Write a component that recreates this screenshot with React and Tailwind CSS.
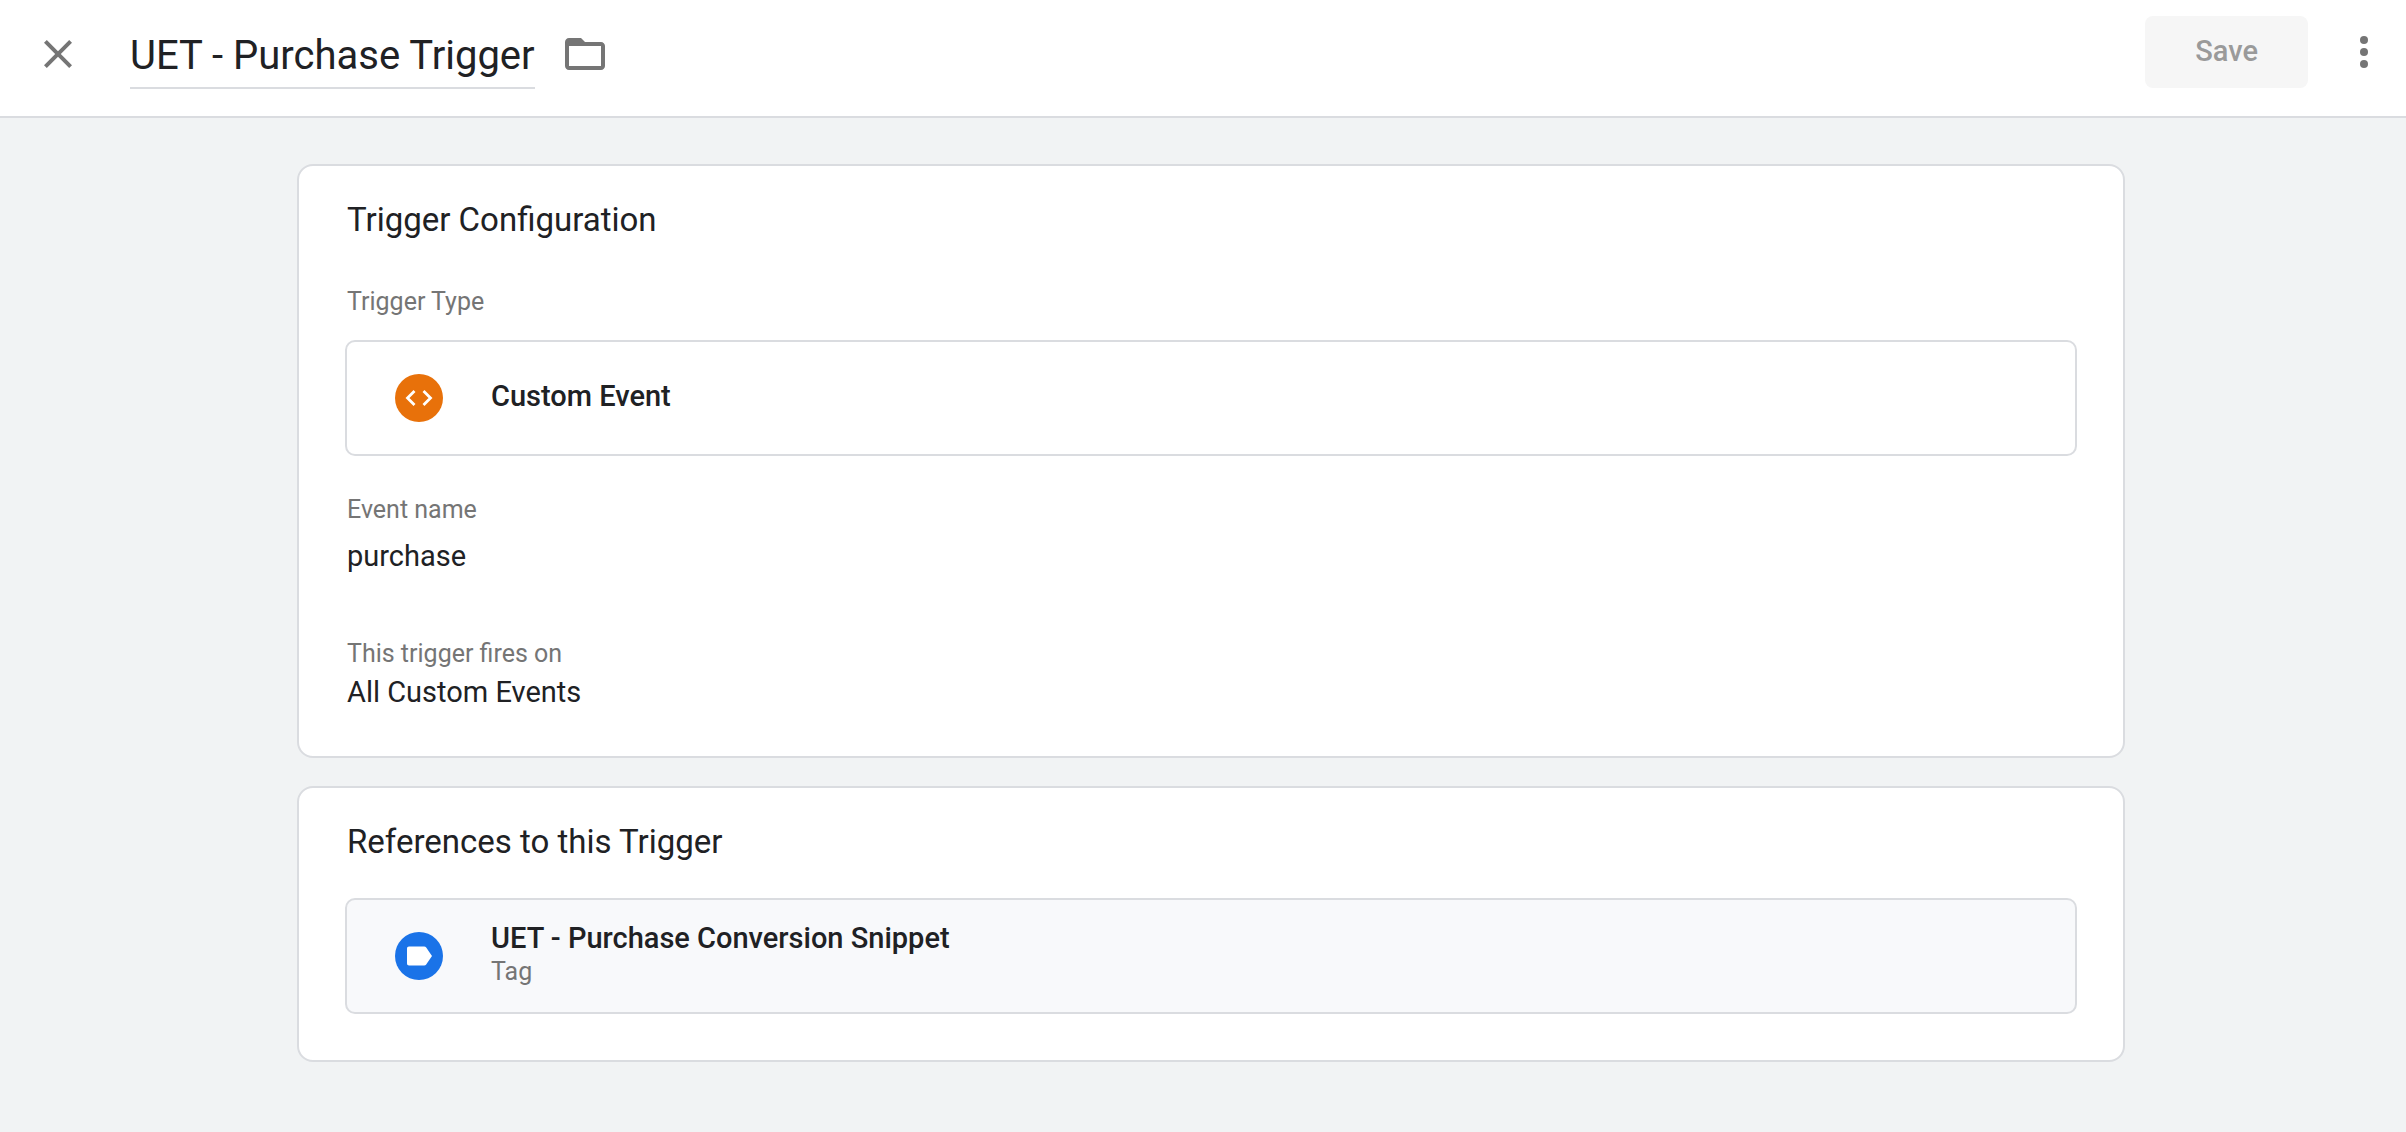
import { useState } from 'react'

function CloseIcon() {
  return (
    <svg viewBox="0 0 24 24" className="size-12" fill="currentColor" aria-hidden="true">
      <path d="M19 6.41 17.59 5 12 10.59 6.41 5 5 6.41 10.59 12 5 17.59 6.41 19 12 13.41 17.59 19 19 17.59 13.41 12z" />
    </svg>
  )
}

function FolderIcon() {
  return (
    <svg viewBox="0 0 24 24" className="size-12" fill="currentColor" aria-hidden="true">
      <path d="M20 6h-8l-2-2H4c-1.1 0-1.99.9-1.99 2L2 18c0 1.1.9 2 2 2h16c1.1 0 2-.9 2-2V8c0-1.1-.9-2-2-2zm0 12H4V8h16v10z" />
    </svg>
  )
}

function MoreIcon() {
  return (
    <svg viewBox="0 0 24 24" className="size-12" fill="currentColor" aria-hidden="true">
      <circle cx="12" cy="6" r="2" />
      <circle cx="12" cy="12" r="2" />
      <circle cx="12" cy="18" r="2" />
    </svg>
  )
}

function CustomEventIcon() {
  return (
    <svg viewBox="0 0 48 48" className="size-12 shrink-0" aria-hidden="true">
      <circle cx="24" cy="24" r="24" fill="#e8710a" />
      <path d="M19.5 17 12.5 24l7 7M28.5 17l7 7-7 7" fill="none" stroke="#fff" strokeWidth="2.8" />
    </svg>
  )
}

function TagIcon() {
  return (
    <svg viewBox="0 0 48 48" className="size-12 shrink-0" aria-hidden="true">
      <circle cx="24" cy="24" r="24" fill="#1a73e8" />
      <path
        d="M14 14.5h15.2c.8 0 1.5.4 2 1L37 24l-5.800 8.500c-.5.700-1.200 1-2 1H14c-1.200 0-2-.8-2-2v-15c0-1.200.8-2 2-2z"
        fill="#fff"
      />
    </svg>
  )
}

function Card({ title, children }) {
  return (
    <section className="rounded-2xl border-2 border-[#dadce0] bg-white px-[46px] pt-[34px] pb-[46px]">
      <h2 className="px-0.5 text-[33px] leading-10">{title}</h2>
      {children}
    </section>
  )
}

function App() {
  const [name, setName] = useState('UET - Purchase Trigger')

  return (
    <div className="flex min-h-screen flex-col bg-[#f1f3f4] font-['Roboto',sans-serif] text-[#202124]">
      <header className="flex items-center border-b-2 border-[#dadce0] bg-white pt-[15px] pr-[18px] pb-[27px] pl-[34px] text-[#757575]">
        <button type="button" aria-label="Close" className="pt-1">
          <CloseIcon />
        </button>
        <input
          aria-label="Trigger name"
          className="ml-12 field-sizing-content h-[74px] border-b-2 border-[#dadce0] pt-2 text-[40px] text-[#202124] outline-none"
          onChange={(event) => setName(event.target.value)}
          type="text"
          value={name}
        />
        <button type="button" aria-label="Move to folder" className="ml-[26px] pt-1">
          <FolderIcon />
        </button>
        <button
          type="button"
          disabled
          className="ml-auto h-[72px] rounded-lg bg-[#f6f6f6] px-[50px] text-[29px] font-medium text-[#9a9a9a]"
        >
          Save
        </button>
        <button type="button" aria-label="More actions" className="ml-8">
          <MoreIcon />
        </button>
      </header>

      <main className="flex justify-center py-[46px] pl-4">
        <div className="flex w-full max-w-[1828px] flex-col gap-7">
          <Card title="Trigger Configuration">
            <h3 className="mt-[46px] px-0.5 text-[25px] leading-8 text-[#757575]">Trigger Type</h3>
            <div className="mt-[22px] flex h-[116px] items-center gap-12 rounded-[10px] border-2 border-[#dadce0] px-12">
              <CustomEventIcon />
              <p className="pb-1 text-[29px] leading-9 font-medium">Custom Event</p>
            </div>
            <dl className="mt-[38px] px-0.5">
              <dt className="text-[25px] leading-8 text-[#757575]">Event name</dt>
              <dd className="mt-3 text-[29px] leading-9">purchase</dd>
              <dt className="mt-16 text-[25px] leading-8 text-[#757575]">This trigger fires on</dt>
              <dd className="mt-1 text-[29px] leading-9">All Custom Events</dd>
            </dl>
          </Card>

          <Card title="References to this Trigger">
            <a
              href="#tag"
              className="mt-9 flex h-[116px] items-center gap-12 rounded-[10px] border-2 border-[#dadce0] bg-[#f8f9fb] px-12"
            >
              <TagIcon />
              <div className="pb-1">
                <p className="text-[29px] leading-9 font-medium">UET - Purchase Conversion Snippet</p>
                <p className="text-[25px] leading-8 text-[#757575]">Tag</p>
              </div>
            </a>
          </Card>
        </div>
      </main>
    </div>
  )
}

export default App
